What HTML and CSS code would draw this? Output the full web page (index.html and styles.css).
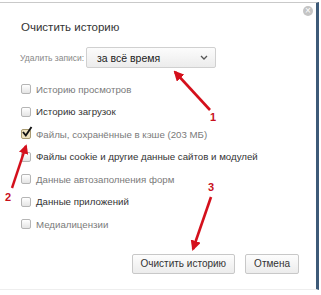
FILE: index.html
```html
<!DOCTYPE html>
<html>
<head>
    <title>Очистить историю</title>
    <meta charset="utf-8">
    <link rel="stylesheet" href="styles.css">
</head>
<body>
    <div class="dialog">
        <span class="close">×</span>
        <h1 class="title">Очистить историю</h1>

        <!-- период удаления -->
        <div class="range">
            <span class="range-label">Удалить записи:</span>
            <div class="select">
                <span>за всё время</span>
                <svg class="chevron" width="8" height="5" viewBox="0 0 8 5"><path d="M1 1 L4 4 L7 1" fill="none" stroke="#555" stroke-width="1.3"/></svg>
            </div>
        </div>

        <!-- что удалять -->
        <div class="options">
            <div class="opt light"><span class="box"></span>Историю просмотров</div>
            <div class="opt"><span class="box"></span>Историю загрузок</div>
            <div class="opt light"><span class="box checked"><svg width="12" height="12" viewBox="0 0 12 12"><path d="M2 6 L4.8 9.5 L10.5 1" fill="none" stroke="#111" stroke-width="1.9"/></svg></span>Файлы, сохранённые в кэше (203 МБ)</div>
            <div class="opt"><span class="box"></span>Файлы cookie и другие данные сайтов и модулей</div>
            <div class="opt light"><span class="box"></span>Данные автозаполнения форм</div>
            <div class="opt"><span class="box"></span>Данные приложений</div>
            <div class="opt light"><span class="box"></span>Медиалицензии</div>
        </div>

        <div class="actions">
            <button class="btn">Очистить историю</button>
            <button class="btn">Отмена</button>
        </div>
    </div>

    <!-- красные стрелки-подсказки поверх окна -->
    <svg class="marks" width="321" height="295" viewBox="0 0 321 295">
        <defs>
            <marker id="head" viewBox="0 0 10 10" refX="8" refY="5" markerWidth="4" markerHeight="4" orient="auto">
                <path d="M0 0 L10 5 L0 10 Z" fill="#d4101c"/>
            </marker>
        </defs>
        <line x1="210" y1="110" x2="175" y2="72" stroke="#d4101c" stroke-width="2.6" marker-end="url(#head)"/>
        <line x1="12" y1="188" x2="26" y2="146" stroke="#d4101c" stroke-width="2.4" marker-end="url(#head)"/>
        <line x1="211" y1="197" x2="193" y2="249" stroke="#d4101c" stroke-width="2.6" marker-end="url(#head)"/>
        <text x="210" y="121" class="num">1</text>
        <text x="5" y="201" class="num">2</text>
        <text x="208" y="191" class="num">3</text>
    </svg>
</body>
</html>
```

FILE: styles.css
```css
/* базовые */
body {
    margin: 0;
    background: #fff;
    font-family: "Liberation Sans", Arial, sans-serif;
    color: #333;
}
.dialog {
    position: relative;
    box-sizing: border-box;
    width: 319px;
    height: 288px;
    margin-top: 2px;
    padding: 15px 17px 0 21px;
    border-top: 1px solid #c9c9c9;
    border-right: 3px solid #3d5a78;
    border-bottom: 1px solid #eee;
}
.close {
    position: absolute;
    top: 3px;
    right: 3px;
    width: 10px;
    height: 10px;
    line-height: 9px;
    text-align: center;
    font-size: 10px;
    color: #fff;
    background: #c4c4c4;
    border-radius: 50%;
}
.title {
    margin: 0;
    font-size: 11.5px;
    font-weight: normal;
    line-height: 18px;
    color: #333;
}

/* период */
.range {
    display: flex;
    align-items: center;
    margin-top: 11px;
    margin-left: -1px;
}
.range-label {
    width: 66px;
    font-size: 8.5px;
    white-space: nowrap;
    color: #888;
}
.select {
    display: flex;
    align-items: center;
    justify-content: space-between;
    box-sizing: border-box;
    width: 130px;
    height: 21px;
    padding: 0 7px 0 10px;
    border: 1px solid #d0d0d0;
    border-radius: 2px;
    background: linear-gradient(#fcfcfc, #ececec);
    font-size: 10.5px;
    color: #222;
}

/* флажки */
.options {
    margin-top: 10px;
}
.opt {
    display: flex;
    align-items: center;
    height: 22.5px;
    font-size: 9.7px;
    white-space: nowrap;
    color: #333;
}
.opt.light {
    color: #7a7a7a;
}
.box {
    position: relative;
    box-sizing: border-box;
    width: 10px;
    height: 10px;
    margin-right: 5px;
    border: 1px solid #b5b5b5;
    border-radius: 2px;
    background: linear-gradient(#fff, #e4e4e4);
}
.box.checked {
    background: #efe3c0;
    border-color: #a89a70;
}
.box svg {
    position: absolute;
    left: -1px;
    top: -4px;
}

/* кнопки */
.actions {
    display: flex;
    justify-content: flex-end;
    gap: 10px;
    margin-top: 18px;
}
.btn {
    height: 20px;
    padding: 0 8px;
    border: 1px solid #c8c8c8;
    border-radius: 2px;
    background: linear-gradient(#fdfdfd, #ececec);
    font-family: "Liberation Sans", Arial, sans-serif;
    font-size: 10px;
    color: #333;
}

/* пометки */
.marks {
    position: absolute;
    left: 0;
    top: 0;
    pointer-events: none;
}
.num {
    font-family: "Liberation Sans", Arial, sans-serif;
    font-weight: bold;
    font-size: 11px;
    fill: #c8101c;
}
```
